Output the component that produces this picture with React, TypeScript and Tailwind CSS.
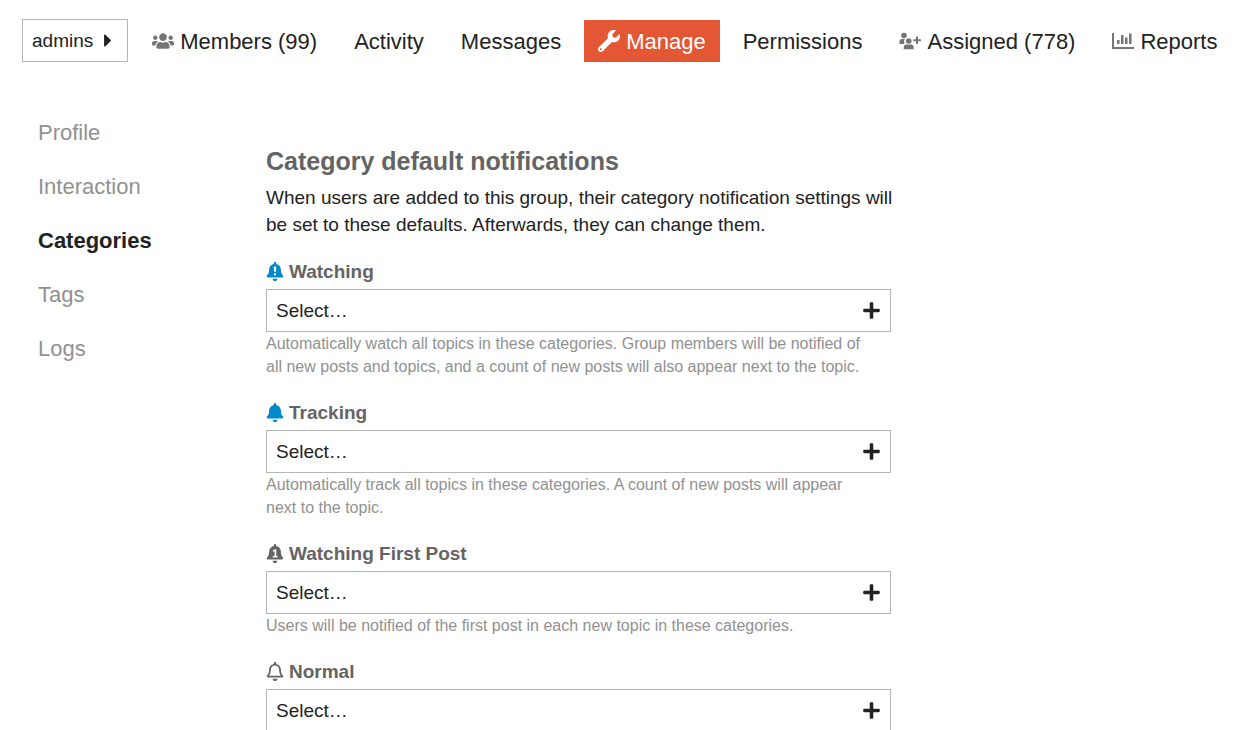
import type { ReactNode } from "react"
import { FaBell, FaCaretRight, FaPlus, FaRegBell, FaUsers, FaWrench } from "react-icons/fa"

function UserGroupPlusIcon() {
  return (
    <svg viewBox="0 0 22 18" className="h-[18px] w-[22px]" fill="currentColor" aria-hidden="true">
      <circle cx="5" cy="3.500" r="2.800" />
      <path d="M0.500 12V9.500a2.500 2.500 0 0 1 2.500-2.500h2.900a4.500 4.500 0 0 0-.4 5z" />
      <circle cx="9.700" cy="9" r="2.800" />
      <path d="M4.700 17.200v-1.700a3 3 0 0 1 3-3h4a3 3 0 0 1 3 3v1.700z" />
      <path d="M17 4.500h2v2.700h2.900v2H19V12h-2V9.200h-2.700v-2H17z" />
    </svg>
  )
}

function ChartIcon() {
  return (
    <svg viewBox="0 0 22 18" className="h-[18px] w-[22px]" fill="currentColor" aria-hidden="true">
      <path d="M0 1h2v14h20v2H0z" />
      <path d="M5 8h2.500v4H5zM9 3h2.500v9H9zM13 5.500h2.500V12H13zM17 1.500h2.500V12H17z" />
    </svg>
  )
}

// Solid bell with a mark cut into its body
function MarkedBell({ mark }: { mark: "exclamation" | "one" }) {
  return (
    <span className="relative block">
      <FaBell className="h-[19px] w-[18px]" />
      <svg viewBox="0 0 448 512" className="absolute inset-0 h-[19px] w-[18px]" aria-hidden="true">
        {mark === "exclamation" ? (
          <path fill="#fff" d="M190 120h68l-10 146h-48zM196 304h56v54h-56z" />
        ) : (
          <path fill="#fff" d="M166 174l52-34h40v180h34v42H162v-42h50V192l-46 20z" />
        )}
      </svg>
    </span>
  )
}

interface Tab {
  label: string
  icon?: ReactNode
  active?: boolean
}

const tabs: Tab[] = [
  { label: "Members (99)", icon: <FaUsers className="size-[22px]" /> },
  { label: "Activity" },
  { label: "Messages" },
  { label: "Manage", icon: <FaWrench className="size-[22px]" />, active: true },
  { label: "Permissions" },
  { label: "Assigned (778)", icon: <UserGroupPlusIcon /> },
  { label: "Reports", icon: <ChartIcon /> },
]

const sections = ["Profile", "Interaction", "Categories", "Tags", "Logs"]

interface Level {
  id: string
  label: string
  icon: ReactNode
  tint: string
  hint?: string
}

const levels: Level[] = [
  {
    id: "watching",
    label: "Watching",
    icon: <MarkedBell mark="exclamation" />,
    tint: "text-[#0088cc]",
    hint: "Automatically watch all topics in these categories. Group members will be notified of all new posts and topics, and a count of new posts will also appear next to the topic.",
  },
  {
    id: "tracking",
    label: "Tracking",
    icon: <FaBell className="h-[19px] w-[18px]" />,
    tint: "text-[#0088cc]",
    hint: "Automatically track all topics in these categories. A count of new posts will appear next to the topic.",
  },
  {
    id: "watching-first-post",
    label: "Watching First Post",
    icon: <MarkedBell mark="one" />,
    tint: "text-[#646464]",
    hint: "Users will be notified of the first post in each new topic in these categories.",
  },
  {
    id: "normal",
    label: "Normal",
    icon: <FaRegBell className="h-[19px] w-[18px]" />,
    tint: "text-[#646464]",
  },
]

function LevelField({ level }: { level: Level }) {
  return (
    <div className="mb-[21px] last:mb-0">
      <label htmlFor={level.id} className="mb-1 flex items-center gap-[5px] text-[19px] leading-[27px] font-bold text-[#646464]">
        <span className={level.tint}>{level.icon}</span>
        {level.label}
      </label>
      <div className="relative">
        <select
          id={level.id}
          className="block h-[43px] w-full appearance-none border border-[#b5b5b5] bg-white px-[9px] pt-0.5 text-[19px] text-[#222]"
        >
          <option>Select…</option>
        </select>
        <FaPlus className="pointer-events-none absolute top-3 right-[10px] size-[19px] text-[#222]" />
      </div>
      {level.hint && <p className="pr-5 text-base leading-[23px] text-[#919191]">{level.hint}</p>}
    </div>
  )
}

export default function App() {
  return (
    <div className="bg-white font-['Liberation_Sans',Arial,sans-serif] text-[#222]">
      <nav className="flex items-center gap-[10px] px-[22px] pt-[19px] whitespace-nowrap">
        <button type="button" className="flex h-[43px] items-center gap-[11px] border border-[#b5b5b5] pr-[15px] pl-[9px] text-[19px]">
          <span className="pt-0.5">admins</span>
          <FaCaretRight className="h-[21px] w-2" />
        </button>
        <ul className="flex gap-[9px]">
          {tabs.map((tab) => (
            <li key={tab.label}>
              <a
                href="#"
                className={`flex h-[42px] items-center gap-[6px] px-[14px] text-[22px] ${tab.active ? "bg-[#e45735] text-white" : ""}`}
              >
                {tab.icon && <span className={tab.active ? "" : "text-[#757575]"}>{tab.icon}</span>}
                <span className="pt-0.5">{tab.label}</span>
              </a>
            </li>
          ))}
        </ul>
      </nav>

      <div className="flex pt-11">
        <ul className="ml-[38px] w-[228px] shrink-0 text-[22px] leading-[54px] text-[#919191]">
          {sections.map((section) => (
            <li key={section}>
              <a href="#" className={section === "Categories" ? "font-bold text-[#222]" : ""}>
                {section}
              </a>
            </li>
          ))}
        </ul>

        <form className="w-full max-w-[625px] pt-[39px]">
          <h1 className="mb-[7px] text-[25px] leading-8 font-bold text-[#646464]">Category default notifications</h1>
          <p className="-mr-4 mb-5 text-[19px] leading-[27px]">
            When users are added to this group, their category notification settings will be set to these defaults.
            Afterwards, they can change them.
          </p>
          {levels.map((level) => (
            <LevelField key={level.id} level={level} />
          ))}
        </form>
      </div>
    </div>
  )
}
